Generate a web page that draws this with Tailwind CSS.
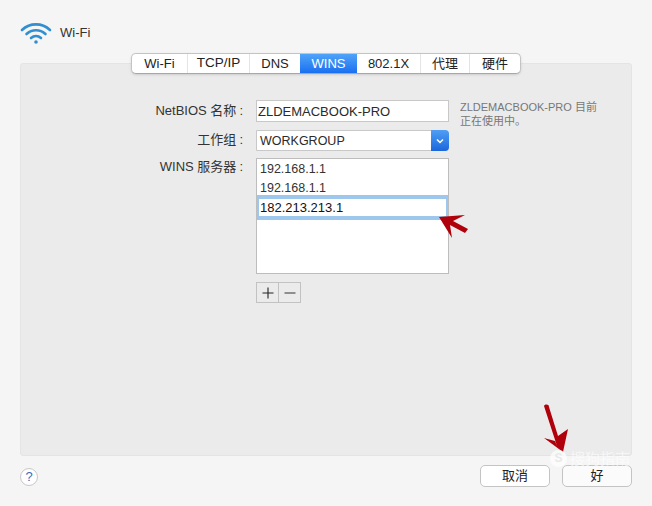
<!DOCTYPE html>
<html lang="en">
<head>
    <meta charset="UTF-8">
    <title>Wi-Fi</title>
    <script src="https://cdn.jsdelivr.net/npm/@tailwindcss/browser@4"></script>
</head>
<body class="relative w-[652px] h-[506px] overflow-hidden bg-[#f5f5f5] text-[#2a2a2a] font-['Liberation_Sans','Noto_Sans_CJK_SC',sans-serif]">

    <!-- header -->
    <div class="flex items-center h-[53px] pl-[20px] pt-[12px]">
        <svg width="32" height="24" viewBox="0 0 32 24" fill="none" stroke="#2f8fd0" stroke-width="2.6" stroke-linecap="round">
            <path d="M2 9 C10 1.500 22 1.500 30 9"/>
            <path d="M6.500 13 C12 8 20 8 25.500 13"/>
            <path d="M11 17 C14 14.500 18 14.500 21 17"/>
            <circle cx="16" cy="21" r="1.800" fill="#2f8fd0" stroke="none"/>
        </svg>
        <span class="ml-[8px] text-[13px] text-[#333]">Wi-Fi</span>
    </div>

    <!-- panel -->
    <div class="mx-[20px] mt-[10px] w-[612px] h-[393px] bg-[#ebebeb] border border-[#e4e4e4] rounded-[3px] relative">
        <!-- tabs -->
        <div class="absolute left-[110px] top-[-11px] flex h-[21px] bg-white rounded-[5px] border border-[#c4c4c4] border-b-[#a8a8a8] text-[13px] text-[#222] shadow-sm overflow-hidden">
            <div class="w-[56px] flex items-center justify-center border-r border-[#e4e4e4]">Wi-Fi</div>
            <div class="w-[62px] flex items-center justify-center border-r border-[#e4e4e4] text-[13.5px]">TCP/IP</div>
            <div class="w-[50px] flex items-center justify-center">DNS</div>
            <div class="w-[57px] flex items-center justify-center text-white bg-gradient-to-b from-[#4fa3f8] to-[#1a6ff0]">WINS</div>
            <div class="w-[64px] flex items-center justify-center border-r border-[#e4e4e4]">802.1X</div>
            <div class="w-[49px] flex items-center justify-center border-r border-[#e4e4e4]">代理</div>
            <div class="w-[50px] flex items-center justify-center">硬件</div>
        </div>

        <!-- form -->
        <div class="grid grid-cols-[222px_193px_1fr] pt-[36px] text-[13px]">
            <div class="text-right h-[22px] leading-[22px] text-[#333]">NetBIOS 名称<span class="ml-[3px]">:</span></div>
            <div class="ml-[13px] w-[193px] h-[22px] bg-white border border-[#c8c8c8] flex items-center pl-[1px] pt-[2px] text-[13px]">ZLDEMACBOOK-PRO</div>
            <div class="ml-[24px] h-[22px] text-[11px] leading-[14px] text-[#777] w-[140px]">ZLDEMACBOOK-PRO 目前正在使用中。</div>

            <div class="text-right pt-[8px] text-[#333]">工作组<span class="ml-[3px]">:</span></div>
            <div class="ml-[13px] mt-[8px] w-[193px] h-[21px] bg-white border border-[#c8c8c8] rounded-r-[4px] flex items-center pl-[3px] pt-[1px] text-[12.5px] relative">
                WORKGROUP
                <div class="absolute right-[-1px] top-[-1px] w-[18px] h-[21px] rounded-r-[4px] bg-gradient-to-b from-[#4f9ff5] to-[#1b66dc] flex items-center justify-center">
                    <svg width="10" height="8" viewBox="0 0 10 8" fill="none" stroke="white" stroke-width="1.500"><path d="M2 2.500 L5 5.500 L8 2.500"/></svg>
                </div>
            </div>
            <div></div>

            <div class="text-right pt-[6px] text-[#333]">WINS 服务器<span class="ml-[3px]">:</span></div>
            <div class="ml-[13px] mt-[7px] w-[193px]">
                <div class="h-[116px] bg-white border border-[#bdbdbd] text-[12.5px] pt-[1px] text-[#333]">
                    <div class="h-[19px] pl-[3px] leading-[19px]">192.168.1.1</div>
                    <div class="h-[16px] pl-[3px] leading-[18px]">192.168.1.1</div>
                    <div class="h-[25px] border-[4px] border-[#9ec7ee] border-x-[2px] pl-[1px] leading-[17px] text-[13px] text-[#111] bg-white">182.213.213.1</div>
                </div>
                <div class="mt-[8px] flex w-[45px] h-[21px] border border-[#c2c2c2] text-[#333]">
                    <div class="w-[22px] flex items-center justify-center border-r border-[#c2c2c2]">
                        <svg width="12" height="12" viewBox="0 0 12 12" stroke="#222" stroke-width="1.100"><path d="M6 0.500 V11.500 M0.500 6 H11.500"/></svg>
                    </div>
                    <div class="flex-1 flex items-center justify-center">
                        <svg width="12" height="12" viewBox="0 0 12 12" stroke="#444" stroke-width="1.100"><path d="M0.500 6 H11.500"/></svg>
                    </div>
                </div>
            </div>
            <div></div>
        </div>
    </div>

    <!-- footer -->
    <div class="flex items-start justify-between pl-[20px] pr-[20px] mt-[9px]">
        <div class="mt-[3px] w-[18px] h-[18px] rounded-full bg-white border border-[#c8c8c8] flex items-center justify-center text-[13px] text-[#3b6db5]">?</div>
        <div class="flex gap-[12px]">
            <div class="w-[70px] h-[22px] bg-white border border-[#c4c4c4] rounded-[5px] flex items-center justify-center text-[13px] text-[#222]">取消</div>
            <div class="w-[70px] h-[22px] bg-[#fbfbfb] border border-[#c4c4c4] rounded-[5px] flex items-center justify-center text-[13px] text-[#222]">好</div>
        </div>
    </div>

    <!-- red annotation arrows -->
    <svg class="absolute left-0 top-0" width="652" height="506" viewBox="0 0 652 506" fill="#b0000c" stroke="none">
        <path d="M439 217 L465 215 L453 221 L468 229 L465 233 L450 225 L452 238 Z"/>
        <path d="M544 406 C545 404 549 404 549 407 L558 436 L568 429 L563 452 L544 438 L555 441 L557 446 Z"/>
    </svg>

    <!-- watermark -->
    <div class="absolute left-[550px] top-[450px] flex items-center gap-[3px] text-[15px] leading-[15px] text-white/60">
        <div class="w-[17px] h-[17px] rounded-full bg-white/70 text-[#e9e9e9] text-[12px] font-bold flex items-center justify-center">S</div>
        <span>搜狗指南</span>
    </div>

</body>
</html>
